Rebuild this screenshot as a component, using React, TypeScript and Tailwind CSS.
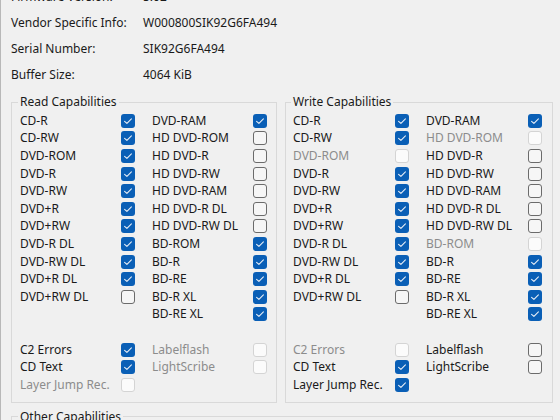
import React from "react";

type Item = { label: string; checked?: boolean; disabled?: boolean };

const Check = ({ checked, disabled }: { checked?: boolean; disabled?: boolean }) => {
  if (checked) {
    return (
      <div className="w-[14px] h-[14px] rounded-[3px] bg-[#0a5fb6] flex items-center justify-center shrink-0">
        <svg width="14" height="14" viewBox="0 0 14 14">
          <path d="M3.6 7.3 L5.9 9.4 L10.4 4.9" fill="none" stroke="#e8eef6" strokeWidth="1.1" strokeLinecap="round" strokeLinejoin="round" />
        </svg>
      </div>
    );
  }
  if (disabled) {
    return <div className="w-[14px] h-[14px] rounded-[3px] border border-[#d4d4d4] bg-[#fbfbfb] shrink-0" />;
  }
  return <div className="w-[14px] h-[14px] rounded-[3px] border border-[#6b6b6b] bg-[#f6f6f6] shrink-0" />;
};

const Row = ({ item, labelW }: { item: Item; labelW: string }) => (
  <div className="h-[17.6px] flex items-center">
    <div className={`${labelW} whitespace-nowrap ${item.disabled ? "text-[#8c8c8c]" : "text-[#1a1a1a]"}`}>{item.label}</div>
    <Check checked={item.checked} disabled={item.disabled} />
  </div>
);

const Col = ({ items, labelW }: { items: Item[]; labelW: string }) => (
  <div className="flex flex-col">
    {items.map((it, i) => (
      <Row key={i} item={it} labelW={labelW} />
    ))}
  </div>
);

const c = (label: string): Item => ({ label, checked: true });
const u = (label: string): Item => ({ label });
const d = (label: string): Item => ({ label, disabled: true });

const readA = [c("CD-R"), c("CD-RW"), c("DVD-ROM"), c("DVD-R"), c("DVD-RW"), c("DVD+R"), c("DVD+RW"), c("DVD-R DL"), c("DVD-RW DL"), c("DVD+R DL"), u("DVD+RW DL")];
const readB = [c("DVD-RAM"), u("HD DVD-ROM"), u("HD DVD-R"), u("HD DVD-RW"), u("HD DVD-RAM"), u("HD DVD-R DL"), u("HD DVD-RW DL"), c("BD-ROM"), c("BD-R"), c("BD-RE"), c("BD-R XL"), c("BD-RE XL")];
const readC = [c("C2 Errors"), c("CD Text"), d("Layer Jump Rec.")];
const readD = [d("Labelflash"), d("LightScribe")];

const writeA = [c("CD-R"), c("CD-RW"), d("DVD-ROM"), c("DVD-R"), c("DVD-RW"), c("DVD+R"), c("DVD+RW"), c("DVD-R DL"), c("DVD-RW DL"), c("DVD+R DL"), u("DVD+RW DL")];
const writeB = [c("DVD-RAM"), d("HD DVD-ROM"), u("HD DVD-R"), u("HD DVD-RW"), u("HD DVD-RAM"), u("HD DVD-R DL"), u("HD DVD-RW DL"), d("BD-ROM"), c("BD-R"), c("BD-RE"), c("BD-R XL"), c("BD-RE XL")];
const writeC = [d("C2 Errors"), c("CD Text"), c("Layer Jump Rec.")];
const writeD = [u("Labelflash"), u("LightScribe")];

const Group = ({
  title,
  a,
  b,
  cc,
  dd,
  labelW,
  cls,
}: {
  title: string;
  a: Item[];
  b: Item[];
  cc: Item[];
  dd: Item[];
  labelW: string;
  cls: string;
}) => (
  <fieldset className={`border border-[#d9d9d9] pt-[2px] pb-[8px] ${cls}`}>
    <legend className="px-[2px] -ml-[2px] leading-[16px] text-[#1a1a1a]">{title}</legend>
    <div className="flex gap-[17px]">
      <Col items={a} labelW={labelW} />
      <Col items={b} labelW={labelW} />
    </div>
    <div className="h-[17.6px]" />
    <div className="flex gap-[17px] items-start">
      <Col items={cc} labelW={labelW} />
      <Col items={dd} labelW={labelW} />
    </div>
  </fieldset>
);

export default function App() {
  return (
    <div
      className="w-[560px] h-[420px] overflow-hidden bg-[#f0f0f0] text-[12px] text-[#1a1a1a] border-l border-[#b8b8b8]"
      style={{ fontFamily: '"Noto Sans", "Open Sans", sans-serif' }}
    >
      <div className="pl-[10px] -mt-[16px]">
        {[
          ["Firmware Version:", "5.02"],
          ["Vendor Specific Info:", "W000800SIK92G6FA494"],
          ["Serial Number:", "SIK92G6FA494"],
          ["Buffer Size:", "4064 KiB"],
        ].map(([k, v]) => (
          <div key={k} className="h-[26px] flex items-center">
            <div className="w-[132px]">{k}</div>
            <div>{v}</div>
          </div>
        ))}
        <div className="flex gap-[8px] mt-[6px]">
          <Group title="Read Capabilities" a={readA} b={readB} cc={readC} dd={readD} labelW="w-[101px]" cls="w-[266px] pl-[8px]" />
          <Group title="Write Capabilities" a={writeA} b={writeB} cc={writeC} dd={writeD} labelW="w-[102px]" cls="w-[268px] pl-[7px]" />
        </div>
        <fieldset className="mt-[6px] w-[542px] h-[40px] border border-[#d9d9d9] pl-[8px]">
          <legend className="px-[2px] -ml-[2px] leading-[16px]">Other Capabilities</legend>
        </fieldset>
      </div>
    </div>
  );
}
